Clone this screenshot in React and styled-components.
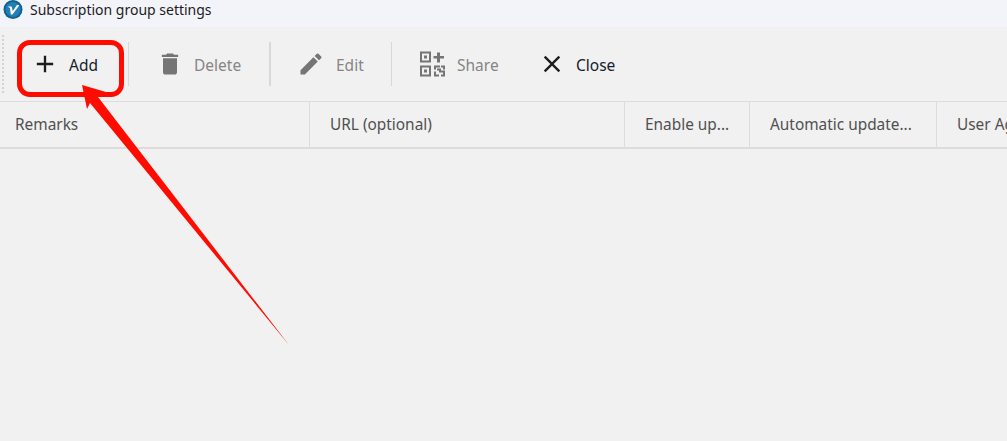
import React from "react";
import styled, { createGlobalStyle } from "styled-components";
import { MdAdd, MdClose, MdDelete, MdEdit } from "react-icons/md";

const GlobalStyle = createGlobalStyle`
  html, body {
    margin: 0;
    height: 100%;
    background: #f1f1f1;
    overflow: hidden;
  }
`;

const Page = styled.div`
  position: relative;
  width: 1007px;
  height: 441px;
  overflow: hidden;
  background: #f1f1f1;
  font-family: "Noto Sans", "Open Sans", sans-serif;
`;

const TitleBar = styled.div`
  display: flex;
  align-items: flex-start;
  gap: 7px;
  height: 27px;
  padding: 0 0 0 3px;
  box-sizing: border-box;
  background: #f3f4f9;
`;

const TitleText = styled.span`
  font-size: 14px;
  line-height: 19px;
  color: #1c1c1c;
`;

const Toolbar = styled.div`
  display: flex;
  align-items: center;
  height: 75px;
  padding-left: 17px;
  box-sizing: border-box;
  border-bottom: 1px solid #dcdcdc;
  position: relative;
`;

const Grip = styled.div`
  position: absolute;
  left: 2px;
  top: 8px;
  width: 2px;
  height: 60px;
  background: repeating-linear-gradient(to bottom, #d4d4d4 0 2px, transparent 2px 4px);
`;

const ToolButton = styled.div`
  display: flex;
  align-items: center;
  gap: ${(p) => p.$space || 11}px;
  flex: none;
  width: ${(p) => p.$width}px;
  height: 48px;
  padding-left: ${(p) => p.$inset || 14}px;
  box-sizing: border-box;
  margin-left: ${(p) => p.$offset || 0}px;
  font-size: 15.5px;
  color: ${(p) => (p.$disabled ? "#858585" : "#16212b")};
  svg {
    flex: none;
    width: 28px;
    height: 28px;
    color: ${(p) => (p.$disabled ? "#757575" : "#1c1c1c")};
  }
`;

const ToolLabel = styled.span`
  padding-top: 1px;
`;

const Separator = styled.div`
  flex: none;
  width: ${(p) => p.$width || 1}px;
  height: 44px;
  margin: 0 12px;
  background: #d8d8d8;
`;

const HeaderRow = styled.div`
  display: grid;
  grid-template-columns: 310px 315px 125px 187px 200px;
  height: 47px;
  box-sizing: border-box;
  border-bottom: 2px solid #dcdcdc;
`;

const HeaderCell = styled.div`
  display: flex;
  align-items: center;
  padding-left: ${(p) => (p.$first ? 15 : 20)}px;
  box-sizing: border-box;
  border-right: 1px solid #dcdcdc;
  font-size: 15.4px;
  color: #4f4f4f;
  white-space: nowrap;
`;

const HighlightBox = styled.div`
  position: absolute;
  left: 17px;
  top: 40px;
  width: 107px;
  height: 57px;
  box-sizing: border-box;
  border: 5px solid #fe0c00;
  border-radius: 13px;
`;

const ArrowLayer = styled.svg`
  position: absolute;
  left: 0;
  top: 0;
  pointer-events: none;
`;

const Logo = () => (
  <svg width="20" height="20" viewBox="0 0 20 20">
    <circle cx="10" cy="9.5" r="9.5" fill="#14608f" />
    <circle cx="10" cy="9.5" r="7.5" fill="#2180b6" />
    <path d="M4.5 6.5 H8.5 L9.8 11 L14 5 H16.5 L9.5 14.5 H7.8 L7 8 Z" fill="#fff" />
  </svg>
);

const QrPlus = () => (
  <svg viewBox="-2 -1.5 28 28" fill="#757575">
    <path fillRule="evenodd" d="M0 0H11V11H0ZM2 2V9H9V2ZM4 4H7V7H4Z" />
    <path fillRule="evenodd" d="M0 14H11V25H0ZM2 16V23H9V16ZM4 18H7V21H4Z" />
    <path d="M17 1H20V4.5H24V7H20V11H17V7H13.5V4.5H17Z" />
    <path d="M14 14H20V16H16V18H14ZM21 14H25V18H23V16H21ZM17 17H21V19H25V25H21V23H23V21H19V19H17ZM14 20H16V23H19V25H14Z" />
  </svg>
);

const columns = ["Remarks", "URL (optional)", "Enable up...", "Automatic update...", "User Agent"];

export default function App() {
  return (
    <Page>
      <GlobalStyle />
      <TitleBar>
        <Logo />
        <TitleText>Subscription group settings</TitleText>
      </TitleBar>
      <Toolbar>
        <Grip />
        <ToolButton $width={99} $space={10}>
          <MdAdd />
          <ToolLabel>Add</ToolLabel>
        </ToolButton>
        <Separator />
        <ToolButton $width={116} $inset={15} $space={10} $disabled>
          <MdDelete />
          <ToolLabel>Delete</ToolLabel>
        </ToolButton>
        <Separator $width={2} />
        <ToolButton $width={96} $disabled>
          <MdEdit />
          <ToolLabel>Edit</ToolLabel>
        </ToolButton>
        <Separator />
        <ToolButton $width={110} $disabled>
          <QrPlus />
          <ToolLabel>Share</ToolLabel>
        </ToolButton>
        <ToolButton $width={110} $offset={10} $space={10}>
          <MdClose />
          <ToolLabel>Close</ToolLabel>
        </ToolButton>
      </Toolbar>
      <HeaderRow>
        {columns.map((name, i) => (
          <HeaderCell key={name} $first={i === 0}>
            {name}
          </HeaderCell>
        ))}
      </HeaderRow>
      <HighlightBox />
      <ArrowLayer width="1007" height="441" viewBox="0 0 1007 441">
        <polygon points="82,85 106,92 98,97 289,345 90,103 87,109" fill="#fe0c00" />
      </ArrowLayer>
    </Page>
  );
}
